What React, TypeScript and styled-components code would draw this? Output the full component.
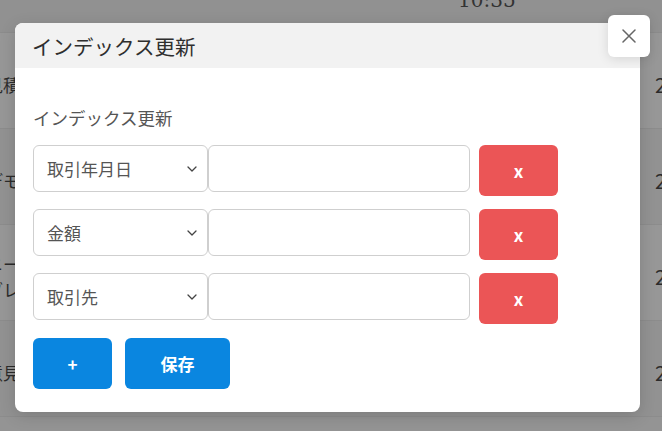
import styled, { createGlobalStyle } from 'styled-components'

const JP = `"Noto Sans CJK JP", "Noto Sans", sans-serif`

const GlobalStyle = createGlobalStyle`
  html, body {
    margin: 0;
    padding: 0;
    width: 662px;
    height: 431px;
    overflow: hidden;
    background: #949494;
    font-family: ${JP};
  }
`

const rows = [
  { left: ['見積'], right: '2' },
  { left: ['デモ'], right: '2' },
  { left: ['ニー', 'ブレ'], right: '2' },
  { left: ['意見'], right: '2' },
]

const fields = ['取引年月日', '金額', '取引先']

const Page = styled.div`
  position: relative;
  width: 662px;
  height: 431px;
  overflow: hidden;
  color: #2b2b2b;
`

const TopBar = styled.div`
  height: 33px;
  background: #919191;
  display: flex;
  justify-content: flex-start;
  padding-left: 458px;
  font-family: 'DejaVu Serif', serif;
  font-size: 20px;
  line-height: 20px;
  color: #333;
  box-sizing: border-box;
  border-bottom: 1px solid #8c8c8c;
`

const TimeText = styled.span`
  margin-top: -10px;
`

const Row = styled.div<{ $alt: boolean }>`
  height: 96px;
  box-sizing: border-box;
  padding-top: 8px;
  display: flex;
  align-items: center;
  justify-content: space-between;
  background: ${({ $alt }) => ($alt ? '#929292' : '#979797')};
  border-bottom: 1px solid #8c8c8c;
  font-size: 17px;
`

const LeftCell = styled.div`
  margin-left: -14px;
  display: flex;
  flex-direction: column;
  line-height: 26px;
  white-space: nowrap;
`

const RightCell = styled.div`
  margin-right: -4px;
  font-size: 20px;
`

const Overlay = styled.div`
  position: absolute;
  inset: 0;
`

const Modal = styled.div`
  position: absolute;
  left: 15px;
  top: 23px;
  width: 625px;
  height: 389px;
  background: #fff;
  border-radius: 8px;
  box-shadow: 0 4px 16px rgba(0, 0, 0, 0.15);
  display: flex;
  flex-direction: column;
`

const ModalHeader = styled.div`
  height: 45px;
  background: #f2f2f2;
  border-radius: 8px 8px 0 0;
  display: flex;
  align-items: center;
  padding-left: 17px;
`

const Title = styled.h2`
  margin: 0;
  font-size: 20.5px;
  font-weight: 400;
  color: #2e2e2e;
`

const CloseButton = styled.button`
  position: absolute;
  left: 608px;
  top: 15px;
  width: 42px;
  height: 42px;
  border: none;
  border-radius: 6px;
  background: #fff;
  box-shadow: 0 2px 12px rgba(0, 0, 0, 0.12);
  display: flex;
  align-items: center;
  justify-content: center;
  padding: 0;
`

const Body = styled.div`
  padding: 38px 18px 0;
  display: flex;
  flex-direction: column;
`

const Label = styled.div`
  font-size: 17.5px;
  color: #555;
  line-height: 24px;
  margin-bottom: 15px;
`

const FieldList = styled.div`
  display: flex;
  flex-direction: column;
  gap: 13px;
`

const FieldRow = styled.div`
  display: flex;
  align-items: flex-start;
`

const SelectBox = styled.div`
  width: 175px;
  height: 47px;
  box-sizing: border-box;
  border: 1px solid #cfcfcf;
  border-radius: 6px;
  display: flex;
  align-items: center;
  justify-content: space-between;
  padding: 0 10px 0 13px;
  font-size: 17px;
  color: #555;
`

const TextInput = styled.div`
  width: 262px;
  height: 47px;
  box-sizing: border-box;
  border: 1px solid #cfcfcf;
  border-radius: 6px;
`

const Button = styled.button<{ $color: string; $width: number }>`
  width: ${({ $width }) => $width}px;
  height: 51px;
  border: none;
  border-radius: 6px;
  background: ${({ $color }) => $color};
  color: #fff;
  font-family: ${JP};
  font-weight: 700;
  font-size: 17px;
  display: flex;
  align-items: center;
  justify-content: center;
  padding: 0;
`

const RemoveButton = styled(Button)`
  margin-left: 9px;
`

const Actions = styled.div`
  display: flex;
  gap: 13px;
  margin-top: 14px;
`

const Chevron = () => (
  <svg width="10" height="6" viewBox="0 0 10 6" fill="none">
    <path d="M1 1l4 4 4-4" stroke="#444" strokeWidth="1.3" strokeLinecap="round" strokeLinejoin="round" />
  </svg>
)

const CloseIcon = () => (
  <svg width="14" height="14" viewBox="0 0 14 14" fill="none">
    <path d="M1 1l12 12M13 1L1 13" stroke="#666" strokeWidth="1.5" strokeLinecap="round" />
  </svg>
)

const App = () => {
  return (
    <>
      <GlobalStyle />
      <Page>
        <TopBar>
          <TimeText>10:35</TimeText>
        </TopBar>
        {rows.map((row, i) => (
          <Row key={i} $alt={i % 2 === 1}>
            <LeftCell>
              {row.left.map((t) => (
                <span key={t}>{t}</span>
              ))}
            </LeftCell>
            <RightCell>{row.right}</RightCell>
          </Row>
        ))}
        <Overlay>
          <Modal>
            <ModalHeader>
              <Title>インデックス更新</Title>
            </ModalHeader>
            <Body>
              <Label>インデックス更新</Label>
              <FieldList>
                {fields.map((f) => (
                  <FieldRow key={f}>
                    <SelectBox>
                      <span>{f}</span>
                      <Chevron />
                    </SelectBox>
                    <TextInput />
                    <RemoveButton $color="#eb5556" $width={79}>
                      x
                    </RemoveButton>
                  </FieldRow>
                ))}
              </FieldList>
              <Actions>
                <Button $color="#0a86e0" $width={79}>
                  +
                </Button>
                <Button $color="#0a86e0" $width={105}>
                  保存
                </Button>
              </Actions>
            </Body>
          </Modal>
          <CloseButton>
            <CloseIcon />
          </CloseButton>
        </Overlay>
      </Page>
    </>
  )
}

export default App
